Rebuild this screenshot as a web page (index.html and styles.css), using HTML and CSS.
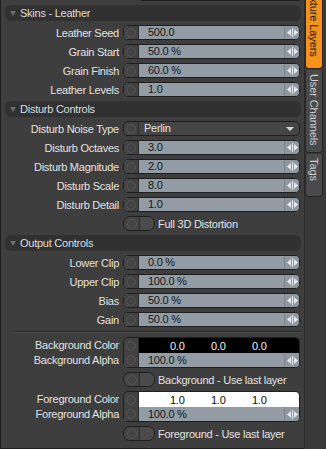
FILE: index.html
```html
<!DOCTYPE html>
<html>
<head>
<meta charset="utf-8">
<link rel="stylesheet" href="styles.css">
</head>
<body>
<div class="app">
  <div class="panel">
    <div class="stub"></div>

    <div class="hdr"><span class="tri"></span>Skins - Leather</div>
    <div class="row"><span class="lbl">Leather Seed</span><div class="field"><span class="cap"><i class="dot"></i></span><span class="val">500.0</span><span class="spin"><svg width="11" height="9" viewBox="0 0 11 9"><polygon points="0,4.5 4,1 4,8"/><rect x="5" y="0" width="1" height="9"/><polygon points="11,4.5 7,1 7,8"/></svg></span></div></div>
    <div class="row"><span class="lbl">Grain Start</span><div class="field"><span class="cap"><i class="dot"></i></span><span class="val">50.0 %</span><span class="spin"><svg width="11" height="9" viewBox="0 0 11 9"><polygon points="0,4.5 4,1 4,8"/><rect x="5" y="0" width="1" height="9"/><polygon points="11,4.5 7,1 7,8"/></svg></span></div></div>
    <div class="row"><span class="lbl">Grain Finish</span><div class="field"><span class="cap"><i class="dot"></i></span><span class="val">60.0 %</span><span class="spin"><svg width="11" height="9" viewBox="0 0 11 9"><polygon points="0,4.5 4,1 4,8"/><rect x="5" y="0" width="1" height="9"/><polygon points="11,4.5 7,1 7,8"/></svg></span></div></div>
    <div class="row"><span class="lbl">Leather Levels</span><div class="field"><span class="cap"><i class="dot"></i></span><span class="val">1.0</span><span class="spin"><svg width="11" height="9" viewBox="0 0 11 9"><polygon points="0,4.5 4,1 4,8"/><rect x="5" y="0" width="1" height="9"/><polygon points="11,4.5 7,1 7,8"/></svg></span></div></div>

    <div class="hdr"><span class="tri"></span>Disturb Controls</div>
    <div class="row"><span class="lbl">Disturb Noise Type</span><div class="field drop"><span class="cap"><i class="dot"></i></span><span class="val">Perlin</span><span class="caret"></span></div></div>
    <div class="row"><span class="lbl">Disturb Octaves</span><div class="field"><span class="cap"><i class="dot"></i></span><span class="val">3.0</span><span class="spin"><svg width="11" height="9" viewBox="0 0 11 9"><polygon points="0,4.5 4,1 4,8"/><rect x="5" y="0" width="1" height="9"/><polygon points="11,4.5 7,1 7,8"/></svg></span></div></div>
    <div class="row"><span class="lbl">Disturb Magnitude</span><div class="field"><span class="cap"><i class="dot"></i></span><span class="val">2.0</span><span class="spin"><svg width="11" height="9" viewBox="0 0 11 9"><polygon points="0,4.5 4,1 4,8"/><rect x="5" y="0" width="1" height="9"/><polygon points="11,4.5 7,1 7,8"/></svg></span></div></div>
    <div class="row"><span class="lbl">Disturb Scale</span><div class="field"><span class="cap"><i class="dot"></i></span><span class="val">8.0</span><span class="spin"><svg width="11" height="9" viewBox="0 0 11 9"><polygon points="0,4.5 4,1 4,8"/><rect x="5" y="0" width="1" height="9"/><polygon points="11,4.5 7,1 7,8"/></svg></span></div></div>
    <div class="row"><span class="lbl">Disturb Detail</span><div class="field"><span class="cap"><i class="dot"></i></span><span class="val">1.0</span><span class="spin"><svg width="11" height="9" viewBox="0 0 11 9"><polygon points="0,4.5 4,1 4,8"/><rect x="5" y="0" width="1" height="9"/><polygon points="11,4.5 7,1 7,8"/></svg></span></div></div>
    <div class="row"><span class="lbl"></span><div class="tog"><span class="tl"><i class="dot"></i></span><span class="tr"></span></div><span class="tlabel">Full 3D Distortion</span></div>

    <div class="hdr"><span class="tri"></span>Output Controls</div>
    <div class="row"><span class="lbl">Lower Clip</span><div class="field"><span class="cap"><i class="dot"></i></span><span class="val">0.0 %</span><span class="spin"><svg width="11" height="9" viewBox="0 0 11 9"><polygon points="0,4.5 4,1 4,8"/><rect x="5" y="0" width="1" height="9"/><polygon points="11,4.5 7,1 7,8"/></svg></span></div></div>
    <div class="row"><span class="lbl">Upper Clip</span><div class="field"><span class="cap"><i class="dot"></i></span><span class="val">100.0 %</span><span class="spin"><svg width="11" height="9" viewBox="0 0 11 9"><polygon points="0,4.5 4,1 4,8"/><rect x="5" y="0" width="1" height="9"/><polygon points="11,4.5 7,1 7,8"/></svg></span></div></div>
    <div class="row"><span class="lbl">Bias</span><div class="field"><span class="cap"><i class="dot"></i></span><span class="val">50.0 %</span><span class="spin"><svg width="11" height="9" viewBox="0 0 11 9"><polygon points="0,4.5 4,1 4,8"/><rect x="5" y="0" width="1" height="9"/><polygon points="11,4.5 7,1 7,8"/></svg></span></div></div>
    <div class="row"><span class="lbl">Gain</span><div class="field"><span class="cap"><i class="dot"></i></span><span class="val">50.0 %</span><span class="spin"><svg width="11" height="9" viewBox="0 0 11 9"><polygon points="0,4.5 4,1 4,8"/><rect x="5" y="0" width="1" height="9"/><polygon points="11,4.5 7,1 7,8"/></svg></span></div></div>

    <div class="sep"></div>

    <div class="crow">
      <div class="clbls"><span class="lbl l1">Background Color</span><span class="lbl l2">Background Alpha</span></div>
      <div class="cfield">
        <div class="sub s1"><span class="cap"><i class="dot"></i></span><span class="swatch black"><span>0.0</span><span>0.0</span><span>0.0</span></span></div>
        <div class="sub s2"><span class="cap"><i class="dot"></i></span><span class="val">100.0 %</span><span class="spin"><svg width="11" height="9" viewBox="0 0 11 9"><polygon points="0,4.5 4,1 4,8"/><rect x="5" y="0" width="1" height="9"/><polygon points="11,4.5 7,1 7,8"/></svg></span></div>
      </div>
    </div>
    <div class="row"><span class="lbl"></span><div class="tog"><span class="tl"><i class="dot"></i></span><span class="tr"></span></div><span class="tlabel">Background - Use last layer</span></div>

    <div class="crow">
      <div class="clbls"><span class="lbl l1">Foreground Color</span><span class="lbl l2">Foreground Alpha</span></div>
      <div class="cfield">
        <div class="sub s1"><span class="cap"><i class="dot"></i></span><span class="swatch white"><span>1.0</span><span>1.0</span><span>1.0</span></span></div>
        <div class="sub s2"><span class="cap"><i class="dot"></i></span><span class="val">100.0 %</span><span class="spin"><svg width="11" height="9" viewBox="0 0 11 9"><polygon points="0,4.5 4,1 4,8"/><rect x="5" y="0" width="1" height="9"/><polygon points="11,4.5 7,1 7,8"/></svg></span></div>
      </div>
    </div>
    <div class="row"><span class="lbl"></span><div class="tog"><span class="tl"><i class="dot"></i></span><span class="tr"></span></div><span class="tlabel">Foreground - Use last layer</span></div>
  </div>

  <div class="strip">
    <div class="tab active t1">Texture Layers</div>
    <div class="tab t2">User Channels</div>
    <div class="tab t3">Tags</div>
  </div>
</div>
</body>
</html>
```
FILE: styles.css
```css
html, body {
  margin: 0;
  padding: 0;
  background: #3d3d3d;
}
body {
  font-family: "Liberation Sans", Arial, sans-serif;
  font-size: 11px;
  letter-spacing: -0.25px;
  color: #e2e2e2;
}
.app {
  display: flex;
  width: 326px;
  height: 449px;
  overflow: hidden;
}
.panel {
  width: 304px;
  flex: none;
  box-sizing: border-box;
  height: 449px;
  border-left: 1px solid #1f1f1f;
  border-bottom: 1px solid #1f1f1f;
  background: #3e3e3e;
  display: flex;
  flex-direction: column;
  gap: 4px;
}
.stub {
  height: 1px;
  margin: -1px 4px 0 139px;
  background: #939ca4;
  border: 1px solid #1f1f1f;
  border-top: none;
  border-radius: 0 0 5px 5px;
}
.hdr {
  height: 16px;
  flex: none;
  margin: 0 3px 0 4px;
  background: #313131;
  border-radius: 6px;
  display: flex;
  align-items: center;
  padding-left: 5px;
  gap: 4px;
  color: #dcdcdc;
}
.tri {
  width: 0;
  height: 0;
  border-left: 3px solid transparent;
  border-right: 3px solid transparent;
  border-top: 5px solid #6c6c6c;
}
.row {
  display: flex;
  align-items: center;
  height: 15px;
  flex: none;
}
.lbl {
  width: 118px;
  flex: none;
  text-align: right;
  margin-right: 4px;
  white-space: nowrap;
}
.field {
  width: 177px;
  height: 15px;
  box-sizing: border-box;
  border: 1px solid #1f1f1f;
  border-radius: 5px;
  display: flex;
  overflow: hidden;
  background: #939ca4;
}
.cap {
  width: 14px;
  flex: none;
  background: #424242;
  border-right: 1px solid #2a2a2a;
  display: flex;
  align-items: center;
  justify-content: center;
}
.dot {
  display: block;
  width: 10px;
  height: 10px;
  box-sizing: border-box;
  border-radius: 50%;
  border: 1px solid #575757;
  background: #444;
}
.val {
  flex: 1;
  padding-left: 9px;
  color: #111820;
  line-height: 13px;
  white-space: nowrap;
}
.spin {
  width: 14px;
  flex: none;
  border-left: 1px solid #7d858c;
  background: #8f989f;
  display: flex;
  align-items: center;
  justify-content: center;
}
.spin svg {
  fill: #e4e8ec;
}
.drop {
  background: #454545;
}
.drop .val {
  color: #e2e2e2;
  padding-left: 5px;
}
.caret {
  width: 0;
  height: 0;
  margin: 5px 5px 0 0;
  border-left: 4px solid transparent;
  border-right: 4px solid transparent;
  border-top: 4px solid #d8d8d8;
}
.tog {
  width: 32px;
  height: 15px;
  flex: none;
  box-sizing: border-box;
  border: 1px solid #1f1f1f;
  border-radius: 7px;
  display: flex;
  overflow: hidden;
}
.tl {
  width: 15px;
  background: #444;
  border-right: 1px solid #2c2c2c;
  display: flex;
  align-items: center;
  justify-content: center;
}
.tr {
  flex: 1;
  background: #4b4b4b;
}
.tlabel {
  margin-left: 3px;
  white-space: nowrap;
}
.sep {
  height: 0;
  flex: none;
  margin: 0 3px 0 14px;
  border-top: 1px solid #2a2a2a;
  border-bottom: 1px solid #4c4c4c;
}
.crow {
  display: flex;
  height: 31px;
  flex: none;
}
.clbls {
  display: flex;
  flex-direction: column;
}
.clbls .l1 {
  height: 16px;
  line-height: 16px;
}
.clbls .l2 {
  height: 15px;
  line-height: 15px;
}
.cfield {
  width: 177px;
  height: 31px;
  box-sizing: border-box;
  border: 1px solid #1f1f1f;
  border-radius: 5px;
  overflow: hidden;
  display: flex;
  flex-direction: column;
}
.sub {
  display: flex;
}
.s1 {
  height: 15px;
}
.s2 {
  height: 14px;
  background: #939ca4;
}
.s2 .val {
  line-height: 14px;
}
.swatch {
  flex: 1;
  display: flex;
  align-items: center;
  padding-left: 31px;
}
.swatch span {
  width: 41px;
}
.black {
  background: #000;
  color: #f2f2f2;
}
.white {
  background: #fff;
  color: #0a0a0a;
}
.strip {
  flex: 1;
  box-sizing: border-box;
  background: #393939;
  border-left: 1px solid #2b2b2b;
  display: flex;
  flex-direction: column;
  gap: 1px;
}
.tab {
  width: 18px;
  box-sizing: border-box;
  writing-mode: vertical-rl;
  display: flex;
  align-items: center;
  padding-top: 4px;
  border: 1px solid #262626;
  border-top: none;
  border-radius: 0 0 4px 4px;
  background: #4a4a4a;
  color: #cfcfcf;
  white-space: nowrap;
  letter-spacing: -0.1px;
}
.active {
  background: #f4921c;
  color: #1a1a1a;
}
.t1 {
  height: 89px;
  margin-top: -20px;
  padding-top: 6px;
}
.t2 {
  height: 83px;
}
.t3 {
  height: 43px;
}
```
